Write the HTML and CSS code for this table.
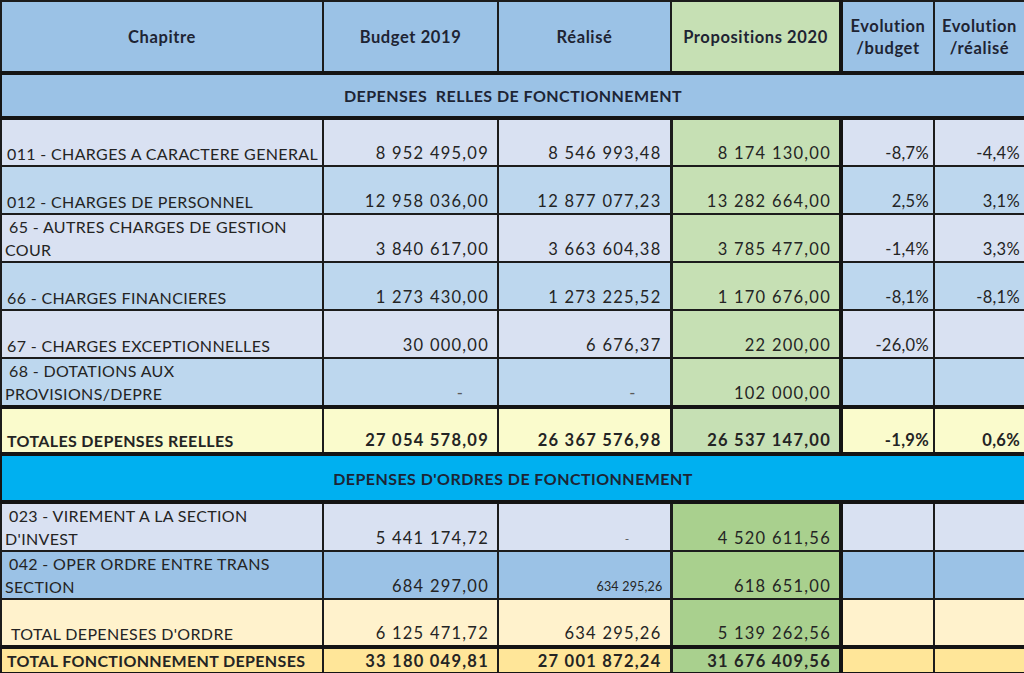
FILE: index.html
```html
<!DOCTYPE html>
<html lang="fr">
<head>
<meta charset="utf-8">
<title>Dépenses de fonctionnement</title>
<link rel="stylesheet" href="styles.css">
</head>
<body>
<table class="budget">
  <colgroup>
    <col class="c-chap"><col class="c-bud"><col class="c-real"><col class="c-prop"><col class="c-evb"><col class="c-evr">
  </colgroup>
  <thead>
    <tr class="head">
      <th>Chapitre</th>
      <th>Budget 2019</th>
      <th>Réalisé</th>
      <th class="prop">Propositions 2020</th>
      <th class="evb">Evolution<br>/budget</th>
      <th>Evolution<br>/réalisé</th>
    </tr>
  </thead>
  <tbody>
    <tr class="section s1"><td colspan="6">DEPENSES&nbsp; RELLES DE FONCTIONNEMENT</td></tr>
    <tr class="row lav first">
      <td class="lbl">011 - CHARGES A CARACTERE GENERAL</td>
      <td class="num">8 952 495,09</td><td class="num">8 546 993,48</td><td class="num prop">8 174 130,00</td>
      <td class="pct evb">-8,7%</td><td class="pct">-4,4%</td>
    </tr>
    <tr class="row blu">
      <td class="lbl">012 - CHARGES DE PERSONNEL</td>
      <td class="num">12 958 036,00</td><td class="num">12 877 077,23</td><td class="num prop">13 282 664,00</td>
      <td class="pct evb">2,5%</td><td class="pct">3,1%</td>
    </tr>
    <tr class="row lav">
      <td class="lbl wrap"><span class="l1">65 - AUTRES CHARGES DE GESTION</span><br>COUR</td>
      <td class="num">3 840 617,00</td><td class="num">3 663 604,38</td><td class="num prop">3 785 477,00</td>
      <td class="pct evb">-1,4%</td><td class="pct">3,3%</td>
    </tr>
    <tr class="row blu">
      <td class="lbl">66 - CHARGES FINANCIERES</td>
      <td class="num">1 273 430,00</td><td class="num">1 273 225,52</td><td class="num prop">1 170 676,00</td>
      <td class="pct evb">-8,1%</td><td class="pct">-8,1%</td>
    </tr>
    <tr class="row lav">
      <td class="lbl">67 - CHARGES EXCEPTIONNELLES</td>
      <td class="num">30 000,00</td><td class="num">6 676,37</td><td class="num prop">22 200,00</td>
      <td class="pct evb">-26,0%</td><td class="pct"></td>
    </tr>
    <tr class="row blu">
      <td class="lbl wrap"><span class="l1">68 - DOTATIONS AUX</span><br>PROVISIONS/DEPRE</td>
      <td class="num dash">-</td><td class="num dash">-</td><td class="num prop">102 000,00</td>
      <td class="pct evb"></td><td class="pct"></td>
    </tr>
    <tr class="row total-reel">
      <td class="lbl">TOTALES DEPENSES REELLES</td>
      <td class="num">27 054 578,09</td><td class="num">26 367 576,98</td><td class="num prop">26 537 147,00</td>
      <td class="pct evb">-1,9%</td><td class="pct">0,6%</td>
    </tr>
    <tr class="section s2"><td colspan="6">DEPENSES D'ORDRES DE FONCTIONNEMENT</td></tr>
    <tr class="row lav ord r023">
      <td class="lbl wrap"><span class="l1">023 - VIREMENT A LA SECTION</span><br>D'INVEST</td>
      <td class="num">5 441 174,72</td><td class="num dash small">-</td><td class="num prop">4 520 611,56</td>
      <td class="pct evb"></td><td class="pct"></td>
    </tr>
    <tr class="row mid ord">
      <td class="lbl wrap"><span class="l1">042 - OPER ORDRE ENTRE TRANS</span><br>SECTION</td>
      <td class="num">684 297,00</td><td class="num small">634 295,26</td><td class="num prop">618 651,00</td>
      <td class="pct evb"></td><td class="pct"></td>
    </tr>
    <tr class="row cream ord">
      <td class="lbl">&nbsp;TOTAL DEPENESES D'ORDRE</td>
      <td class="num">6 125 471,72</td><td class="num">634 295,26</td><td class="num prop">5 139 262,56</td>
      <td class="pct evb"></td><td class="pct"></td>
    </tr>
    <tr class="row gold">
      <td class="lbl">TOTAL FONCTIONNEMENT DEPENSES</td>
      <td class="num">33 180 049,81</td><td class="num">27 001 872,24</td><td class="num prop">31 676 409,56</td>
      <td class="pct evb"></td><td class="pct"></td>
    </tr>
  </tbody>
</table>
</body>
</html>
```

FILE: styles.css
```css
html, body {
  margin: 0;
  padding: 0;
  background: #ffffff;
}

.budget {
  border-collapse: collapse;
  table-layout: fixed;
  width: 1024px;
  font-family: Lato, "Open Sans", "Liberation Sans", sans-serif;
  font-size: 16px;
  color: #242424;
}

.c-chap { width: 322px; }
.c-bud { width: 175px; }
.c-real { width: 173px; }
.c-prop { width: 170px; }
.c-evb { width: 93px; }
.c-evr { width: 91px; }

.budget th,
.budget td {
  border: 2px solid #1c1c1c;
  padding: 0;
  overflow: hidden;
  white-space: nowrap;
}

/* row heights */
.head { height: 72px; }
.s1 { height: 45px; }
.row { height: 48px; }
.s2 { height: 48px; }
.r023 { height: 47px; }
.total-reel { height: 47px; }
.cream { height: 48px; }
.gold { height: 26px; }

/* header */
.head th {
  background: #9bc2e6;
  font-weight: 700;
  font-size: 16.5px;
  letter-spacing: 0.6px;
  color: #1e2433;
  line-height: 22px;
  text-align: center;
  vertical-align: middle;
  border-bottom: 4px solid #141414;
}
.head th.prop { background: #c6e0b4; }

/* column accents */
.budget .prop { border-right: 4px solid #141414; }
.budget td.prop { border-left-width: 3px; }

/* section rows */
.section td {
  text-align: center;
  vertical-align: middle;
  font-weight: 700;
  font-size: 16px;
  letter-spacing: 0.45px;
  color: #1d2535;
  border: 4px solid #141414;
  border-left-width: 2px;
  border-right-width: 2px;
}
.s1 td { background: #9bc2e6; }
.s2 td { background: #00b0f0; }

/* data rows */
.row td {
  vertical-align: bottom;
  line-height: 23px;
  padding-bottom: 0;
}
.lbl { text-align: left; padding-left: 5px !important; letter-spacing: 0.35px; }
.lbl.wrap { padding-left: 3px !important; }
.lbl .l1 { padding-left: 4px; }
.num {
  text-align: right;
  font-size: 16.5px;
  letter-spacing: 1.25px;
  padding-right: 8px !important;
}
.pct {
  text-align: right;
  font-size: 16.5px;
  letter-spacing: 0.3px;
  padding-right: 4px !important;
}
.num.dash { padding-right: 34px !important; color: #5a5a5a; letter-spacing: 0; }
.num.dash.small { padding-right: 40px !important; font-size: 12px; }
.num.small { font-size: 12.5px; letter-spacing: 0.2px; padding-right: 7px !important; }

.lav td { background: #d9e1f2; }
.blu td { background: #bdd7ee; }
.mid td { background: #9bc2e6; }
.cream td { background: #fff2cc; border-bottom: 4px solid #141414; }

.total-reel td {
  background: #fafbcc;
  font-weight: 700;
  border-top: 4px solid #141414;
  border-bottom: 4px solid #141414;
}
.gold td {
  background: #ffe699;
  font-weight: 700;
  line-height: 20px;
  vertical-align: middle;
  border-top: 4px solid #141414;
  border-bottom: 2px solid #141414;
}

.row td.prop { background: #c6e0b4; }
.ord td.prop, .gold td.prop { background: #a9d08e; }
```
